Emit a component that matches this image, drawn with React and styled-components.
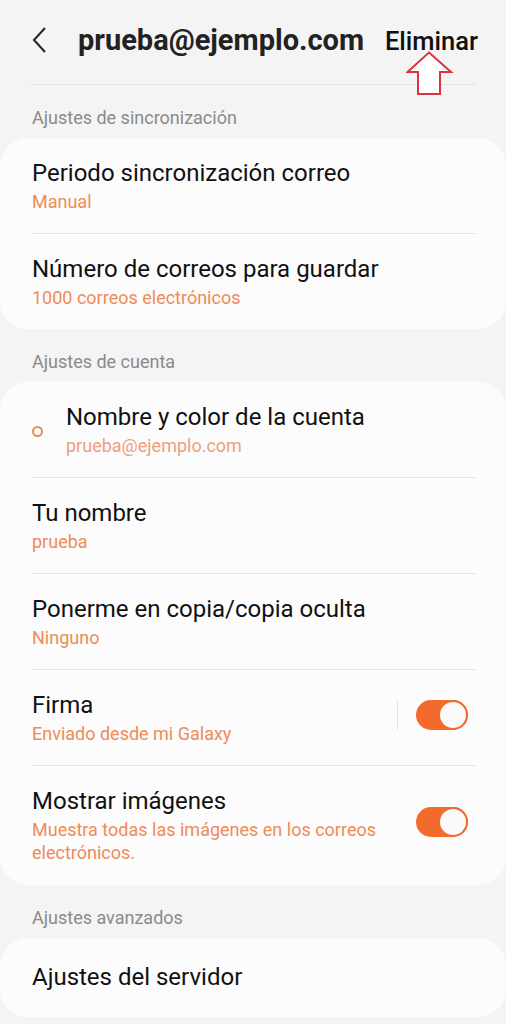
import React from "react";
import styled, { createGlobalStyle } from "styled-components";

const GlobalStyle = createGlobalStyle`
  body {
    margin: 0;
    background: #f4f4f4;
    font-family: Roboto, "Noto Sans", sans-serif;
  }
`;

const Page = styled.div`
  width: 506px;
  min-height: 1024px;
  background: #f4f4f4;
  display: flex;
  flex-direction: column;
`;

const Header = styled.div`
  display: flex;
  align-items: center;
  height: 84px;
  margin: 0 30px;
  border-bottom: 1px solid #e6e6e6;
  position: relative;
`;

const BackButton = styled.div`
  width: 24px;
  height: 28px;
  margin-left: 2px;
  display: flex;
  align-items: center;
  margin-top: -4px;
`;

const Title = styled.h1`
  margin: -4px 0 0 22px;
  font-size: 29px;
  font-weight: 700;
  color: #222;
  flex: 1;
  white-space: nowrap;
`;

const DeleteButton = styled.div`
  font-size: 25.5px;
  font-weight: 500;
  color: #111;
  margin: -2px -2px 0 0;
`;

const Arrow = styled.svg`
  position: absolute;
  left: 376px;
  top: 51px;
`;

const SectionLabel = styled.div`
  font-size: 18px;
  color: #8a8a8a;
  padding: 23px 32px 10px;
  line-height: 20px;
`;

const Card = styled.div`
  background: #fcfcfc;
  border-radius: 28px;
  display: flex;
  flex-direction: column;
`;

const Row = styled.div`
  display: flex;
  align-items: center;
  margin: 0 30px 0 32px;
  padding: ${(p) => p.$pad || "20px 0 20px"};
  border-bottom: ${(p) => (p.$last ? "none" : "1px solid #e6e6e6")};
`;

const Dot = styled.span`
  width: 7px;
  height: 7px;
  border: 2px solid #e98a5e;
  border-radius: 50%;
  margin: 4px 23px 0 0;
`;

const Texts = styled.div`
  flex: 1;
  display: flex;
  flex-direction: column;
`;

const ItemTitle = styled.div`
  font-size: 24px;
  color: #111;
  line-height: 30px;
  white-space: nowrap;
`;

const ItemSub = styled.div`
  font-size: 18px;
  color: ${(p) => (p.$light ? "#eda07e" : "#ee8b5a")};
  line-height: 23px;
  margin-top: 2px;
  padding-right: ${(p) => p.$pr || 0}px;
`;

const Divider = styled.div`
  width: 1px;
  height: 30px;
  background: #e4e4e4;
  margin: -6px 18px 0 0;
`;

const Toggle = styled.div`
  width: 52px;
  height: 30px;
  border-radius: 15px;
  background: #f36b2c;
  position: relative;
  margin: -6px 8px 0 0;
  flex-shrink: 0;
  &::after {
    content: "";
    position: absolute;
    right: 0;
    top: 0;
    width: 26px;
    height: 26px;
    border-radius: 50%;
    background: #fafafa;
    border: 2px solid #f36b2c;
  }
`;

export default function App() {
  return (
    <Page>
      <GlobalStyle />
      <Header>
        <BackButton>
          <svg width="16" height="26" viewBox="0 0 16 26">
            <path d="M13 1 L2 13 L13 25" fill="none" stroke="#222" strokeWidth="2" />
          </svg>
        </BackButton>
        <Title>prueba@ejemplo.com</Title>
        <DeleteButton>Eliminar</DeleteButton>
        <Arrow width="48" height="46" viewBox="0 0 48 46">
          <path
            d="M23 1.5 L45 21 L34 21 L34 43 L12 43 L12 21 L1.5 21 Z"
            fill="#fff"
            stroke="#e0323c"
            strokeWidth="2"
          />
        </Arrow>
      </Header>

      <SectionLabel>Ajustes de sincronización</SectionLabel>
      <Card>
        <Row>
          <Texts>
            <ItemTitle>Periodo sincronización correo</ItemTitle>
            <ItemSub>Manual</ItemSub>
          </Texts>
        </Row>
        <Row $last>
          <Texts>
            <ItemTitle>Número de correos para guardar</ItemTitle>
            <ItemSub>1000 correos electrónicos</ItemSub>
          </Texts>
        </Row>
      </Card>

      <SectionLabel>Ajustes de cuenta</SectionLabel>
      <Card>
        <Row>
          <Dot />
          <Texts>
            <ItemTitle>Nombre y color de la cuenta</ItemTitle>
            <ItemSub $light>prueba@ejemplo.com</ItemSub>
          </Texts>
        </Row>
        <Row>
          <Texts>
            <ItemTitle>Tu nombre</ItemTitle>
            <ItemSub>prueba</ItemSub>
          </Texts>
        </Row>
        <Row>
          <Texts>
            <ItemTitle>Ponerme en copia/copia oculta</ItemTitle>
            <ItemSub>Ninguno</ItemSub>
          </Texts>
        </Row>
        <Row>
          <Texts>
            <ItemTitle>Firma</ItemTitle>
            <ItemSub>Enviado desde mi Galaxy</ItemSub>
          </Texts>
          <Divider />
          <Toggle />
        </Row>
        <Row $last $pad="20px 0 21px">
          <Texts>
            <ItemTitle>Mostrar imágenes</ItemTitle>
            <ItemSub $pr={20}>
              Muestra todas las imágenes en los correos electrónicos.
            </ItemSub>
          </Texts>
          <Toggle />
        </Row>
      </Card>

      <SectionLabel>Ajustes avanzados</SectionLabel>
      <Card>
        <Row $last $pad="24px 0 25px">
          <Texts>
            <ItemTitle>Ajustes del servidor</ItemTitle>
          </Texts>
        </Row>
      </Card>
    </Page>
  );
}
